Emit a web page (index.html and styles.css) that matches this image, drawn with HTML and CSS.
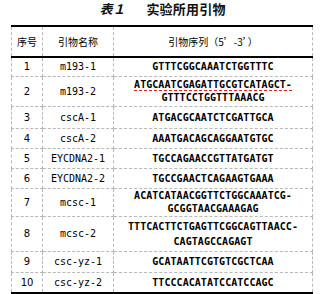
FILE: index.html
```html
<!DOCTYPE html>
<html lang="zh">
<head>
<meta charset="utf-8">
<link rel="stylesheet" href="styles.css">
</head>
<body>
<div class="title"><span class="tnum">表１</span><span class="tname">实验所用引物</span></div>
<table class="primers">
  <colgroup><col class="c-no"><col class="c-name"><col class="c-seq"></colgroup>
  <thead>
    <tr class="hd"><th>序号</th><th>引物名称</th><th>引物序列（5’-3’）</th></tr>
  </thead>
  <tbody>
    <tr class="r19"><td class="no">1</td><td class="nm">m193-1</td><td class="sq">GTTTCGGCAAATCTGGTTTC</td></tr>
    <tr class="r30"><td class="no">2</td><td class="nm">m193-2</td><td class="sq"><span class="spell">ATGCAATCGAGATTGCGTCATAGCT-</span><br>GTTTCCTGGTTTAAACG</td></tr>
    <tr class="r22"><td class="no">3</td><td class="nm">cscA-1</td><td class="sq">ATGACGCAATCTCGATTGCA</td></tr>
    <tr class="r20"><td class="no">4</td><td class="nm">cscA-2</td><td class="sq">AAATGACAGCAGGAATGTGC</td></tr>
    <tr class="r20"><td class="no">5</td><td class="nm">EYCDNA2-1</td><td class="sq">TGCCAGAACCGTTATGATGT</td></tr>
    <tr class="r20"><td class="no">6</td><td class="nm">EYCDNA2-2</td><td class="sq">TGCCGAACTCAGAAGTGAAA</td></tr>
    <tr class="r28"><td class="no">7</td><td class="nm">mcsc-1</td><td class="sq">ACATCATAACGGTTCTGGCAAATCG-<br>GCGGTAACGAAAGAG</td></tr>
    <tr class="r35"><td class="no">8</td><td class="nm">mcsc-2</td><td class="sq">TTTCACTTCTGAGTTCGGCAGTTAACC-<br>CAGTAGCCAGAGT</td></tr>
    <tr class="r21"><td class="no">9</td><td class="nm">csc-yz-1</td><td class="sq">GCATAATTCGTGTCGCTCAA</td></tr>
    <tr class="r21"><td class="no">10</td><td class="nm">csc-yz-2</td><td class="sq">TTCCCACATATCCATCCAGC</td></tr>
  </tbody>
</table>
</body>
</html>
```
FILE: styles.css
```css
html, body {
  margin: 0;
  padding: 0;
  background: #fff;
}
body {
  width: 325px;
  height: 294px;
  overflow: hidden;
  color: #000;
  font-family: "DejaVu Sans Mono", "Noto Sans CJK SC", monospace;
}
.title {
  height: 25px;
  display: flex;
  justify-content: center;
  align-items: flex-start;
  padding-top: 1px;
  box-sizing: border-box;
  font-family: "Noto Sans CJK SC", sans-serif;
  font-size: 13px;
  line-height: 15px;
  font-weight: 700;
  color: #111;
}
.tnum {
  font-style: italic;
  margin-right: 21px;
}
.tname {
  letter-spacing: 0.2px;
}
.primers {
  margin-left: 11px;
  width: 301px;
  border-collapse: collapse;
  table-layout: fixed;
  font-size: 10px;
}
.c-no { width: 31px; }
.c-name { width: 71px; }
.c-seq { width: 199px; }
.primers th,
.primers td {
  padding: 0;
  text-align: center;
  vertical-align: middle;
  border-left: 1px dashed #b8b8b8;
  border-right: 1px dashed #b8b8b8;
  border-bottom: 1px dashed #b8b8b8;
  line-height: 13px;
}
.primers th {
  font-family: "Noto Sans CJK SC", sans-serif;
  font-weight: 400;
  font-size: 10px;
  border-top: 2px solid #000;
  border-bottom: 2px solid #000;
}
.primers tbody tr:last-child td {
  border-bottom: 2px solid #000;
}
.hd { height: 31px; }
.r19 { height: 19px; }
.r20 { height: 20px; }
.r21 { height: 21px; }
.r22 { height: 22px; }
.r28 { height: 28px; }
.r30 { height: 30px; }
.r35 { height: 35px; }
.no {
  font-family: "DejaVu Sans", sans-serif;
  font-size: 10px;
}
.nm {
  padding-right: 6px;
}
.sq {
  font-weight: 700;
  padding-right: 6px;
  letter-spacing: 0.05px;
}
.r35 .sq {
  line-height: 15px;
}
.spell {
  border-bottom: 1px dashed #e02020;
}
```
